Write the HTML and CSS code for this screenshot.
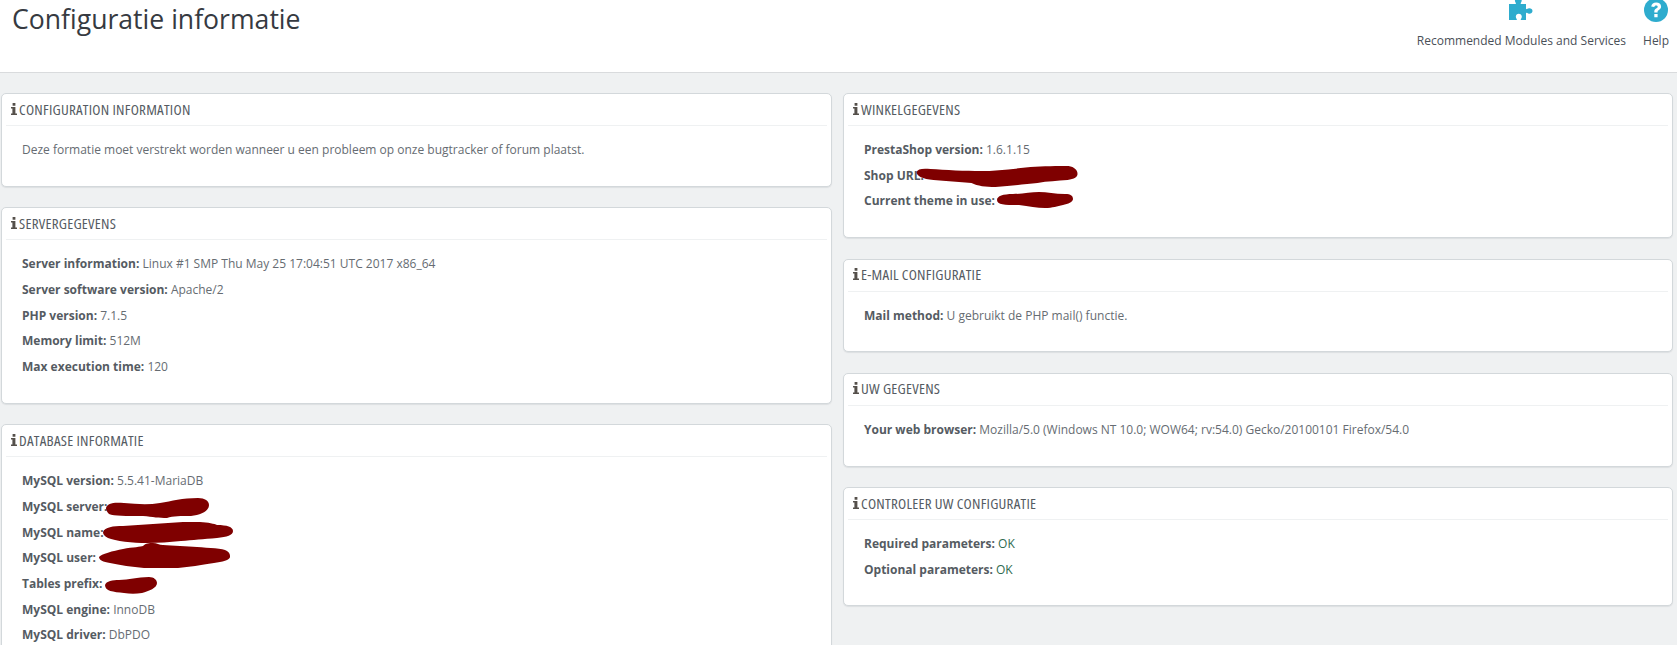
FILE: index.html
```html
<!DOCTYPE html>
<html lang="nl">
<head>
<meta charset="utf-8">
<title>Configuratie informatie</title>
<link rel="stylesheet" href="styles.css">
</head>
<body>
<svg class="sprite" width="0" height="0" aria-hidden="true">
  <symbol id="info" viewBox="0 0 6 12"><path d="M1.6 0h2.8v2.7H1.6zM0 4h4.4v6.4H6V12H0v-1.6h1.4V5.6H0z"/></symbol>
</svg>
<header class="page-head">
  <h1 class="page-title">Configuratie informatie</h1>
  <nav class="toolbar">
    <a class="tool">
      <svg class="tool-icon puzzle" viewBox="0 0 27 24"><path d="M1 6h6.2c.6 0 .9-.5.6-1-.5-.8-.9-1.500-.9-2.500C6.900.8 8.500-.5 10.300-.5s3.400 1.300 3.400 3c0 1-.4 1.700-.9 2.500-.3.500 0 1 .6 1H18v4.500c0 .6.5.9 1 .6.700-.5 1.400-.9 2.300-.9 1.800 0 3.200 1.100 3.200 2.700s-1.400 2.800-3.200 2.800c-.9 0-1.600-.4-2.300-.9-.5-.3-1 0-1 .6V22h-4.600c-.6 0-.9-.5-.5-1 .5-.7.9-1.300.9-2.200 0-1.700-1.300-3-3-3s-3 1.300-3 3c0 .9.400 1.500.9 2.200.4.500.1 1-.5 1H1z"/></svg>
      <span>Recommended Modules and Services</span>
    </a>
    <a class="tool">
      <svg class="tool-icon help" viewBox="0 0 24 24"><circle cx="12" cy="12" r="12"/><path class="q" d="M7.200 8.600C7.700 6 9.500 4.600 12.200 4.600c2.800 0 4.900 1.600 4.900 4 0 1.700-.9 2.700-2.200 3.500-1 .6-1.300 1-1.300 1.900v.4h-3.300v-.8c0-1.600.7-2.500 1.900-3.200 1-.6 1.500-1 1.500-1.700 0-.8-.7-1.300-1.600-1.300-1 0-1.600.6-1.900 1.700zM10.300 16h3.300v3.200h-3.300z"/></svg>
      <span>Help</span>
    </a>
  </nav>
</header>
<main class="columns">
  <div class="column">
    <section class="panel">
      <h2 class="panel-heading"><svg class="info"><use href="#info"/></svg><span class="heading-text">CONFIGURATION INFORMATION</span></h2>
      <p class="row">Deze formatie moet verstrekt worden wanneer u een probleem op onze bugtracker of forum plaatst.</p>
    </section>
    <section class="panel">
      <h2 class="panel-heading"><svg class="info"><use href="#info"/></svg><span class="heading-text">SERVERGEGEVENS</span></h2>
      <p class="row"><b>Server information:</b> Linux #1 SMP Thu May 25 17:04:51 UTC 2017 x86_64</p>
      <p class="row"><b>Server software version:</b> Apache/2</p>
      <p class="row"><b>PHP version:</b> 7.1.5</p>
      <p class="row"><b>Memory limit:</b> 512M</p>
      <p class="row"><b>Max execution time:</b> 120</p>
    </section>
    <section class="panel">
      <h2 class="panel-heading"><svg class="info"><use href="#info"/></svg><span class="heading-text">DATABASE INFORMATIE</span></h2>
      <p class="row"><b>MySQL version:</b> 5.5.41-MariaDB</p>
      <p class="row"><b>MySQL server:</b>
        <svg class="blob blob-server" viewBox="0 0 103 20"><path d="M0 10C1 5 8 4 18 5c12 1 24 2 36 0C66 3 76 0 92 0c7 0 11 3 11 7 0 6-8 10-18 11-10 0-18 0-24 2-8 0-14-1-24-2C20 18 8 18 3 16 1 14 0 12 0 10z"/></svg></p>
      <p class="row"><b>MySQL name:</b>
        <svg class="blob blob-name" viewBox="0 0 130 21"><path d="M0 10C2 5 10 4 20 4 40 3 60 1 80 0c16-1 30 1 34 3 10 0 16 2 16 6 0 4-6 6-16 7-14 1-24 2-36 3-12 1-22 2-34 2C30 21 12 19 5 16 1 14 0 12 0 10z"/></svg></p>
      <p class="row"><b>MySQL user:</b>
        <svg class="blob blob-user" viewBox="0 0 131 25"><path d="M0 14C2 11 14 8 24 6c10-2 18-2 20-3 3-3 6-3 10-3 4 0 6 2 10 2 10 1 24 1 34 2 12 1 26 1 30 4 3 2 3 4 3 6 0 3-8 5-16 6-14 2-24 4-36 5-12 1-22 1-34 0-12-1-24-3-34-5C4 19 0 17 0 14z"/></svg></p>
      <p class="row"><b>Tables prefix:</b>
        <svg class="blob blob-prefix" viewBox="0 0 52 17"><path d="M0 8C1 4 8 3 14 3 24 3 32 0 44 0c5 0 8 3 8 6 0 5-8 8-15 10-6 1-12 1-18 0C8 15 0 14 0 8z"/></svg></p>
      <p class="row"><b>MySQL engine:</b> InnoDB</p>
      <p class="row"><b>MySQL driver:</b> DbPDO</p>
    </section>
  </div>
  <div class="column">
    <section class="panel">
      <h2 class="panel-heading"><svg class="info"><use href="#info"/></svg><span class="heading-text">WINKELGEGEVENS</span></h2>
      <p class="row"><b>PrestaShop version:</b> 1.6.1.15</p>
      <p class="row"><b>Shop URL:</b>
        <svg class="blob blob-url" viewBox="0 0 161 21"><path d="M0 6C1 3 6 2 14 3c14 1 36 2 50 2 16 0 32-2 50-4 12-1 28-1 38-1 6 1 9 4 9 8 0 3-3 5-10 6-10 1-20 1-30 3-12 1-26 3-42 4-10 0-18-1-24-4-12-1-26-2-38-3C6 13 0 10 0 6z"/></svg></p>
      <p class="row"><b>Current theme in use:</b>
        <svg class="blob blob-theme" viewBox="0 0 76 16"><path d="M0 8C0 4 6 2 16 2 26 2 34 0 42 0c8 0 16 2 26 2 6 0 8 2 8 5 0 3-5 5-10 6-6 1-10 3-18 3-8 0-16-2-26-3C8 13 0 13 0 8z"/></svg></p>
    </section>
    <section class="panel">
      <h2 class="panel-heading"><svg class="info"><use href="#info"/></svg><span class="heading-text">E-MAIL CONFIGURATIE</span></h2>
      <p class="row"><b>Mail method:</b> U gebruikt de PHP mail() functie.</p>
    </section>
    <section class="panel">
      <h2 class="panel-heading"><svg class="info"><use href="#info"/></svg><span class="heading-text">UW GEGEVENS</span></h2>
      <p class="row"><b>Your web browser:</b> Mozilla/5.0 (Windows NT 10.0; WOW64; rv:54.0) Gecko/20100101 Firefox/54.0</p>
    </section>
    <section class="panel">
      <h2 class="panel-heading"><svg class="info"><use href="#info"/></svg><span class="heading-text">CONTROLEER UW CONFIGURATIE</span></h2>
      <p class="row"><b>Required parameters:</b> <span class="ok">OK</span></p>
      <p class="row"><b>Optional parameters:</b> <span class="ok">OK</span></p>
    </section>
  </div>
</main>
</body>
</html>
```
FILE: styles.css
```css
* { box-sizing: border-box; }
html, body { margin: 0; height: 645px; overflow: hidden; }
body {
  background: #eff1f2;
  color: #666c72;
  font-family: "Open Sans", sans-serif;
  font-size: 12px;
}
.sprite { position: absolute; }
.page-head {
  display: flex;
  justify-content: space-between;
  height: 73px;
  padding: 0 8px 0 12px;
  background: #fff;
  border-bottom: 1px solid #d9dbdd;
  overflow: hidden;
}
.page-title {
  margin: 0;
  font-size: 26.6px;
  font-weight: 400;
  line-height: 38px;
  color: #363a41;
}
.toolbar { display: flex; gap: 17px; align-items: flex-start; }
.tool {
  display: flex;
  flex-direction: column;
  align-items: center;
  color: #4a5058;
  font-size: 12px;
  line-height: 18px;
}
.tool-icon { display: block; fill: #2eacce; }
.puzzle { width: 27px; height: 24px; margin-top: -2px; margin-bottom: 10px; }
.help { width: 24px; height: 24px; margin-top: -2px; margin-bottom: 10px; }
.q { fill: #fff; }
.columns {
  display: grid;
  grid-template-columns: 831px 830px;
  column-gap: 11px;
  padding: 20px 0 0 1px;
}
.column { display: flex; flex-direction: column; gap: 20.6px; }
.panel {
  padding: 0 4px 23px;
  background: #fff;
  border: 1px solid #d3d8db;
  border-radius: 5px;
  box-shadow: 0 1px 1px #dcdfe1;
}
.panel-heading {
  display: flex;
  align-items: center;
  height: 32px;
  margin: 0 0 11px;
  padding: 0 0 2px 5px;
  border-bottom: 1px solid #eff1f2;
  font-family: "Open Sans", sans-serif;
  font-stretch: 75%;
  font-size: 15px;
  letter-spacing: .25px;
  font-weight: 400;
  color: #555b62;
  white-space: nowrap;
}
.heading-text { display: inline-block; }
.info { width: 6px; height: 12px; margin-right: 2px; fill: #55504b; flex: none; }
.row {
  position: relative;
  margin: 0;
  padding-left: 16px;
  line-height: 25.67px;
  white-space: nowrap;
}
.row b { color: #555b62; font-weight: 700; }
.ok { color: #2f6b4f; }
.blob { position: absolute; fill: #7f0000; }
.blob-server { left: 100px; top: 4px; width: 103px; height: 20px; }
.blob-name { left: 97px; top: 2px; width: 130px; height: 21px; }
.blob-user { left: 93px; top: -2px; width: 131px; height: 25px; }
.blob-prefix { left: 99px; top: 6px; width: 52px; height: 17px; }
.blob-url { left: 68px; top: 3px; width: 162px; height: 21px; }
.blob-theme { left: 149px; top: 4px; width: 76px; height: 16px; }
```
